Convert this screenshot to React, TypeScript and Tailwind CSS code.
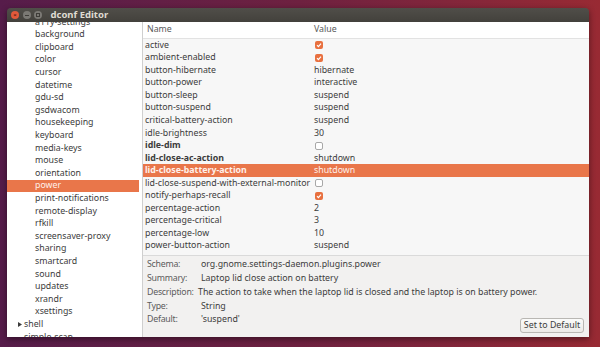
import React from "react";

const sidebarItems = [
  "a11y-settings",
  "background",
  "clipboard",
  "color",
  "cursor",
  "datetime",
  "gdu-sd",
  "gsdwacom",
  "housekeeping",
  "keyboard",
  "media-keys",
  "mouse",
  "orientation",
  "power",
  "print-notifications",
  "remote-display",
  "rfkill",
  "screensaver-proxy",
  "sharing",
  "smartcard",
  "sound",
  "updates",
  "xrandr",
  "xsettings",
];

type Key = { name: string; value?: string; check?: boolean; bold?: boolean; selected?: boolean };

const keys: Key[] = [
  { name: "active", check: true },
  { name: "ambient-enabled", check: true },
  { name: "button-hibernate", value: "hibernate" },
  { name: "button-power", value: "interactive" },
  { name: "button-sleep", value: "suspend" },
  { name: "button-suspend", value: "suspend" },
  { name: "critical-battery-action", value: "suspend" },
  { name: "idle-brightness", value: "30" },
  { name: "idle-dim", check: false, bold: true },
  { name: "lid-close-ac-action", value: "shutdown", bold: true },
  { name: "lid-close-battery-action", value: "shutdown", bold: true, selected: true },
  { name: "lid-close-suspend-with-external-monitor", check: false },
  { name: "notify-perhaps-recall", check: true },
  { name: "percentage-action", value: "2" },
  { name: "percentage-critical", value: "3" },
  { name: "percentage-low", value: "10" },
  { name: "power-button-action", value: "suspend" },
];

const details = [
  { label: "Schema:", value: "org.gnome.settings-daemon.plugins.power" },
  { label: "Summary:", value: "Laptop lid close action on battery" },
  {
    label: "Description:",
    value: "The action to take when the laptop lid is closed and the laptop is on battery power.",
    tight: true,
  },
  { label: "Type:", value: "String" },
  { label: "Default:", value: "'suspend'" },
];

const CheckBox = ({ on }: { on: boolean }) =>
  on ? (
    <div className="w-[8px] h-[8px] rounded-[2px] bg-[#e8703f] flex items-center justify-center">
      <svg width="6" height="6" viewBox="0 0 6 6">
        <path d="M1 3.2 L2.4 4.6 L5 1.6" stroke="#fff" strokeWidth="1.2" fill="none" />
      </svg>
    </div>
  ) : (
    <div className="w-[8px] h-[8px] rounded-[2px] bg-white border border-[#a8a8a8]" />
  );

export default function App() {
  return (
    <div className="w-[600px] h-[347px] overflow-hidden bg-gradient-to-r from-[#561c4a] via-[#6e2140] to-[#982a33] font-['Noto_Sans',sans-serif] text-[8.8px] text-[#3c3c3c] pt-[8px] pl-[7px]">
      <div className="w-[582px] h-[329px] flex flex-col rounded-t-[4px] shadow-[0_2px_6px_rgba(0,0,0,0.45)] overflow-hidden">
        {/* title bar */}
        <div className="h-[14px] bg-gradient-to-b from-[#504e49] to-[#43413c] flex items-center pl-[4px] shrink-0">
          <div className="w-[8px] h-[8px] rounded-full bg-[#e2593b] flex items-center justify-center">
            <span className="text-[6px] leading-none text-[#5a2012] font-bold">×</span>
          </div>
          <div className="w-[8px] h-[8px] rounded-full bg-[#7b7974] ml-[3.5px] flex items-center justify-center">
            <div className="w-[4px] h-[1px] bg-[#3e3c38]" />
          </div>
          <div className="w-[8px] h-[8px] rounded-full bg-[#7b7974] ml-[3.5px] flex items-center justify-center">
            <div className="w-[4px] h-[4px] border border-[#3e3c38]" />
          </div>
          <span className="ml-[8.5px] text-[9.5px] font-bold text-[#dfdbd2] leading-none">dconf Editor</span>
        </div>

        <div className="flex flex-1 min-h-0 min-w-0">
          {/* schema tree */}
          <div className="w-[136px] bg-white border-r border-[#cfcfcf] overflow-hidden shrink-0">
            <div className="-mt-[6px]">
              {sidebarItems.map((item) => (
                <div
                  key={item}
                  className={`h-[12.6px] flex items-center pl-[28px] mr-[3px] ${
                    item === "power" ? "bg-[#e9764a] text-[#fff1ea]" : ""
                  }`}
                >
                  {item}
                </div>
              ))}
              <div className="h-[12.6px] flex items-center pl-[11px]">
                <svg width="4" height="5" viewBox="0 0 4 5" className="mr-[2px]">
                  <path d="M0 0 L4 2.5 L0 5 Z" fill="#3c3c3c" />
                </svg>
                shell
              </div>
              <div className="h-[12.6px] flex items-center pl-[17px]">simple-scan</div>
            </div>
          </div>

          {/* keys */}
          <div className="w-[446px] flex flex-col min-w-0 overflow-hidden">
            <div className="h-[234px] bg-[#f7f7f7] border-b border-[#dadada] shrink-0">
              <div className="h-[17px] bg-white border-b border-[#e2e2e2] flex items-center text-[#5a5a5a]">
                <div className="w-[171px] pl-[4px]">Name</div>
                <div>Value</div>
              </div>
              {keys.map((k) => (
                <div
                  key={k.name}
                  className={`h-[12.55px] flex items-center ${k.selected ? "bg-[#e9764a] text-[#fff1ea]" : ""} ${
                    k.bold ? "font-bold" : ""
                  }`}
                >
                  <div className="w-[171px] pl-[2px] whitespace-nowrap">{k.name}</div>
                  <div className="font-normal">
                    {k.check === undefined ? k.value : <div className="ml-[1px]"><CheckBox on={k.check} /></div>}
                  </div>
                </div>
              ))}
            </div>

            {/* details */}
            <div className="flex-1 bg-[#f2f1f0] flex min-w-0">
              <div className="flex-1 min-w-0 pt-[2px] pl-[4px]">
                {details.map((d) => (
                  <div key={d.label} className="h-[13.8px] flex items-center whitespace-nowrap">
                    <div className="w-[54px] shrink-0 text-[#5c5c5c] tracking-[-0.25px]">{d.label}</div>
                    <div className={d.tight ? "-ml-[3px]" : ""}>{d.value}</div>
                  </div>
                ))}
              </div>
              <div className="flex flex-col justify-end pr-[5px] pb-[4px] shrink-0">
                <button className="h-[15px] w-[64px] rounded-[3px] border border-[#b9b7b3] bg-gradient-to-b from-[#fbfbfa] to-[#eceae7] text-[8.8px] text-[#3c3c3c] leading-none whitespace-nowrap">
                  Set to Default
                </button>
              </div>
            </div>
          </div>
        </div>
      </div>
    </div>
  );
}
